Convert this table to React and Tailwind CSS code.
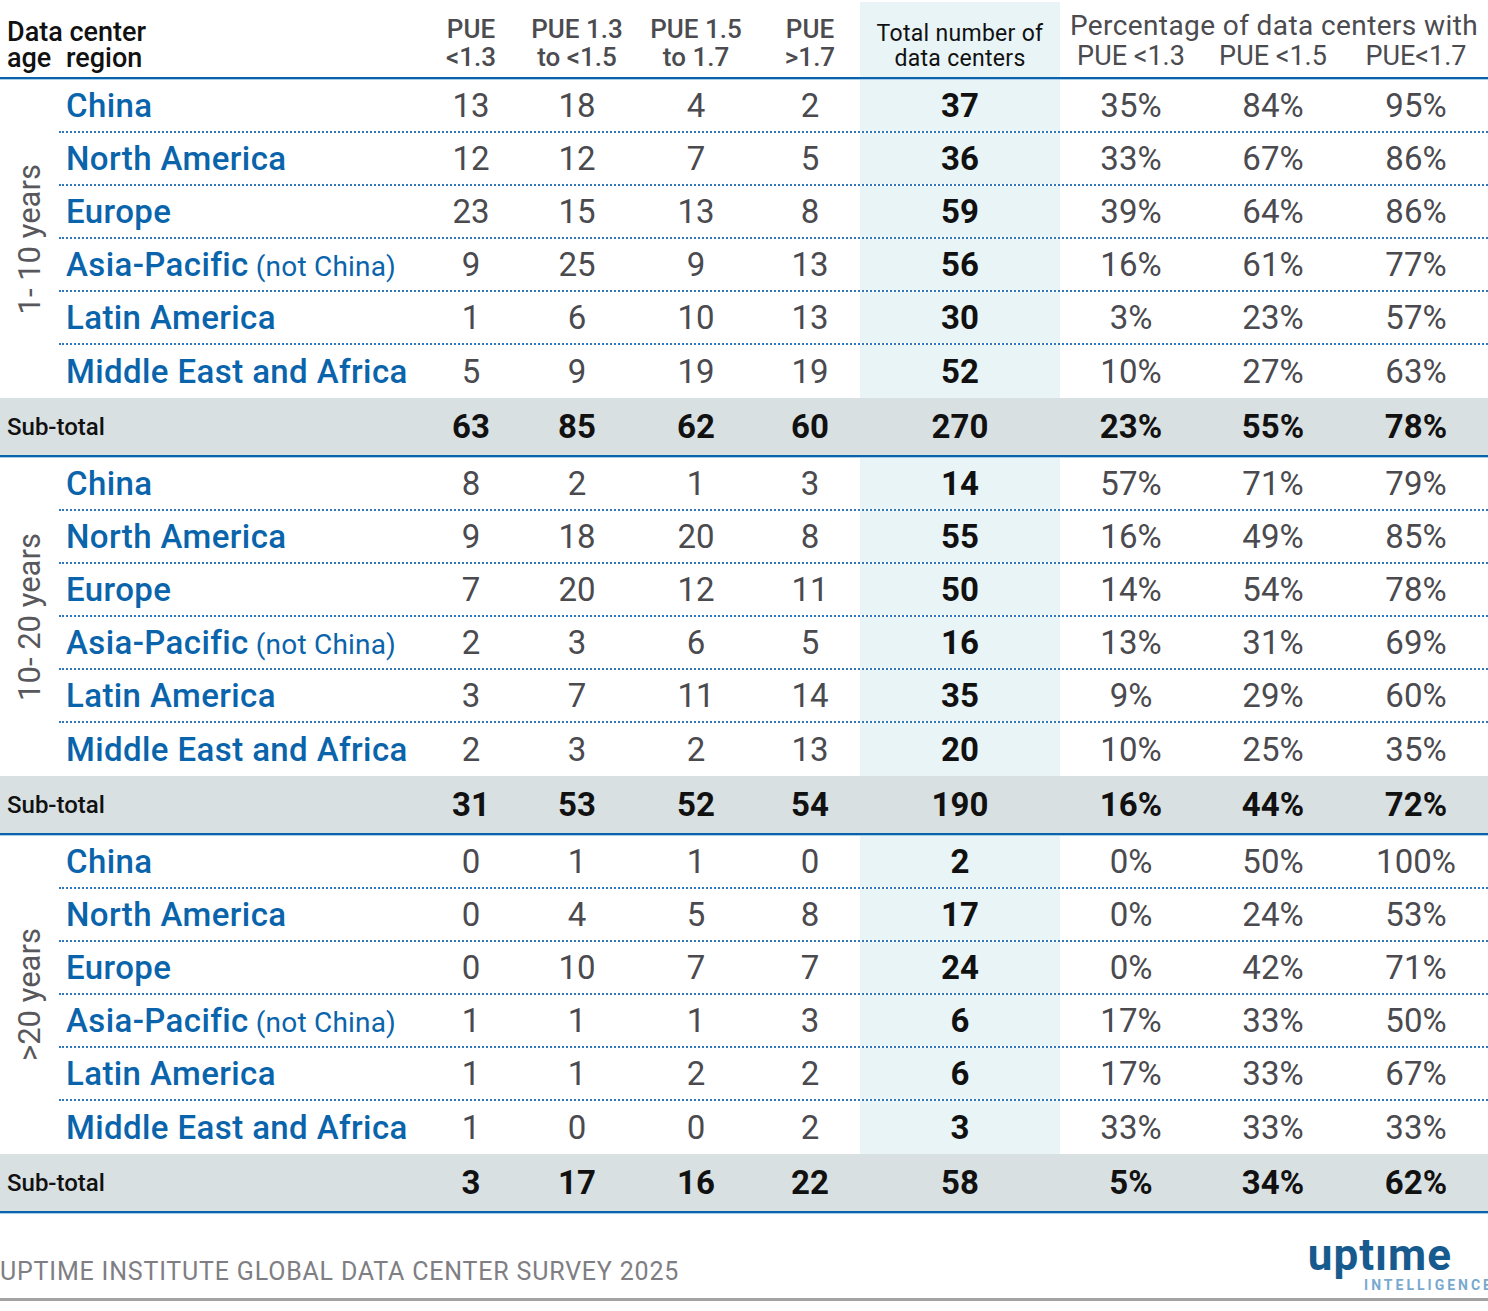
import React from 'react';

const COLS = 'grid grid-cols-[59px_361px_102px_110px_128px_100px_200px_142px_142px_144px]';
const SUB = 'grid grid-cols-[361px_102px_110px_128px_100px_200px_142px_142px_144px]';

const groups = [
  {
    label: '1- 10 years',
    rows: [
      ['China', 13, 18, 4, 2, 37, '35%', '84%', '95%'],
      ['North America', 12, 12, 7, 5, 36, '33%', '67%', '86%'],
      ['Europe', 23, 15, 13, 8, 59, '39%', '64%', '86%'],
      ['Asia-Pacific', 9, 25, 9, 13, 56, '16%', '61%', '77%'],
      ['Latin America', 1, 6, 10, 13, 30, '3%', '23%', '57%'],
      ['Middle East and Africa', 5, 9, 19, 19, 52, '10%', '27%', '63%'],
    ],
    total: [63, 85, 62, 60, 270, '23%', '55%', '78%'],
  },
  {
    label: '10- 20 years',
    rows: [
      ['China', 8, 2, 1, 3, 14, '57%', '71%', '79%'],
      ['North America', 9, 18, 20, 8, 55, '16%', '49%', '85%'],
      ['Europe', 7, 20, 12, 11, 50, '14%', '54%', '78%'],
      ['Asia-Pacific', 2, 3, 6, 5, 16, '13%', '31%', '69%'],
      ['Latin America', 3, 7, 11, 14, 35, '9%', '29%', '60%'],
      ['Middle East and Africa', 2, 3, 2, 13, 20, '10%', '25%', '35%'],
    ],
    total: [31, 53, 52, 54, 190, '16%', '44%', '72%'],
  },
  {
    label: '>20 years',
    rows: [
      ['China', 0, 1, 1, 0, 2, '0%', '50%', '100%'],
      ['North America', 0, 4, 5, 8, 17, '0%', '24%', '53%'],
      ['Europe', 0, 10, 7, 7, 24, '0%', '42%', '71%'],
      ['Asia-Pacific', 1, 1, 1, 3, 6, '17%', '33%', '50%'],
      ['Latin America', 1, 1, 2, 2, 6, '17%', '33%', '67%'],
      ['Middle East and Africa', 1, 0, 0, 2, 3, '33%', '33%', '33%'],
    ],
    total: [3, 17, 16, 22, 58, '5%', '34%', '62%'],
  },
];

const BlueRule = () => (
  <div>
    <div className="h-[2px] bg-[#0a62aa]" />
    <div className="h-[1px] bg-[#a8cde8]" />
  </div>
);

const DataRow = ({ row, last }) => {
  const [region, a, b, c, d, total, p1, p2, p3] = row;
  return (
    <div
      className={`${SUB} h-[53px] items-center text-[33px] text-[#4a4a4f] ${
        last ? '' : 'border-b-2 border-dotted border-[#2f78bd]'
      }`}
    >
      <div className="pl-[7px] text-[#0a64ab] font-medium tracking-[0.4px] whitespace-nowrap">
        {region}
        {region === 'Asia-Pacific' && (
          <span className="font-normal text-[28px] tracking-[0.2px]"> (not China)</span>
        )}
      </div>
      <div className="text-center">{a}</div>
      <div className="text-center">{b}</div>
      <div className="text-center">{c}</div>
      <div className="text-center">{d}</div>
      <div className="h-full flex items-center justify-center bg-[#e8f4f6] font-bold text-[#111]">
        {total}
      </div>
      <div className="text-center">{p1}</div>
      <div className="text-center">{p2}</div>
      <div className="text-center">{p3}</div>
    </div>
  );
};

const Group = ({ group }) => (
  <div>
    <div className="flex">
      <div className="w-[59px] flex items-center justify-center">
        <span className="[writing-mode:vertical-rl] rotate-180 text-[31px] text-[#58585c] whitespace-nowrap leading-none">
          {group.label}
        </span>
      </div>
      <div className="flex-1">
        {group.rows.map((r, i) => (
          <DataRow key={i} row={r} last={i === group.rows.length - 1} />
        ))}
      </div>
    </div>
    <div className={`${COLS} h-[57px] items-center bg-[#d9e0e2] text-[#111]`}>
      <div className="col-span-2 pl-[7px] text-[24px] font-medium">Sub-total</div>
      {group.total.map((v, i) => (
        <div key={i} className="text-center text-[33px] font-bold">
          {v}
        </div>
      ))}
    </div>
    <BlueRule />
  </div>
);

export default function App() {
  return (
    <div className="w-[1488px] h-[1311px] bg-white font-['Roboto',sans-serif] overflow-hidden">
      {/* header */}
      <div className={`${COLS} h-[77px] items-end`}>
        <div className="col-span-2 pb-[6px] text-[27px] leading-[26px] text-[#111] font-medium">
          <div className="pl-[7px]">Data center</div>
          <div className="flex">
            <span className="pl-[7px] w-[59px]">age</span>
            <span className="pl-[7px]">region</span>
          </div>
        </div>
        <div className="pb-[6px] text-center text-[26px] leading-[28px] text-[#4b4b50] font-medium">
          <div>PUE</div>
          <div>&lt;1.3</div>
        </div>
        <div className="pb-[6px] text-center text-[26px] leading-[28px] text-[#4b4b50] font-medium whitespace-nowrap">
          <div>PUE 1.3</div>
          <div>to &lt;1.5</div>
        </div>
        <div className="pb-[6px] text-center text-[26px] leading-[28px] text-[#4b4b50] font-medium whitespace-nowrap">
          <div>PUE 1.5</div>
          <div>to 1.7</div>
        </div>
        <div className="pb-[6px] text-center text-[26px] leading-[28px] text-[#4b4b50] font-medium">
          <div>PUE</div>
          <div>&gt;1.7</div>
        </div>
        <div className="h-[75px] self-end flex flex-col justify-end pb-[6px] bg-[#e8f4f6] text-center text-[23px] leading-[25px] tracking-[0.3px] text-[#111]">
          <div>Total number of</div>
          <div>data centers</div>
        </div>
        <div className="col-span-3 pb-[6px] text-[27px] leading-[30px] text-[#4b4b50]">
          <div className="text-center text-[28px] tracking-[0.4px] whitespace-nowrap">
            Percentage of data centers with
          </div>
          <div className="grid grid-cols-[142px_142px_144px] text-center">
            <span>PUE &lt;1.3</span>
            <span>PUE &lt;1.5</span>
            <span>PUE&lt;1.7</span>
          </div>
        </div>
      </div>
      <BlueRule />

      {groups.map((g) => (
        <Group key={g.label} group={g} />
      ))}

      {/* footer */}
      <div className="h-[84px] flex items-end justify-between">
        <div className="pb-[14px] text-[25px] tracking-[0.8px] text-[#7e7e83] whitespace-nowrap leading-none">
          UPTIME INSTITUTE GLOBAL DATA CENTER SURVEY 2025
        </div>
        <div className="flex flex-col items-end pb-[6px]">
          <div className="pr-[36px] text-[44px] font-bold leading-[38px] tracking-[1px] text-[#165a8e]">
            uptıme
          </div>
          <div className="mt-[4px] text-[14px] font-bold tracking-[3px] leading-none text-[#78a9cf] -mr-[6px]">
            INTELLIGENCE
          </div>
        </div>
      </div>
      <div className="h-[3px] bg-[#a3a3a3]" />
    </div>
  );
}
